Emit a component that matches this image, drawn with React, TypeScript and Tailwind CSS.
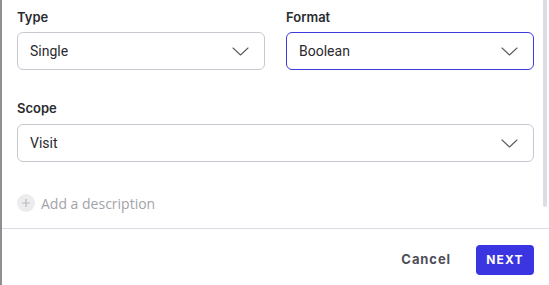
import React from "react";

const Chevron = () => (
  <svg width="17" height="9" viewBox="0 0 17 9" fill="none" className="shrink-0">
    <path d="M1 1l7.5 7 7.5-7" stroke="#5d5c64" strokeWidth="1.1" strokeLinecap="round" strokeLinejoin="round" />
  </svg>
);

const Select = ({ value, active }: { value: string; active?: boolean }) => (
  <div
    className={`h-[38px] rounded-[6px] border flex items-center justify-between pl-[12px] pr-[15px] ${
      active ? "border-[#3d3ae0]" : "border-[#c9c7d0]"
    }`}
  >
    <span className="text-[14px] text-[#2a2a2e]" style={{ fontFamily: "Roboto, Inter, sans-serif" }}>
      {value}
    </span>
    <Chevron />
  </div>
);

const Label = ({ children }: { children: React.ReactNode }) => (
  <div className="h-[16px] leading-[16px] text-[13px] font-semibold text-[#2b2b30]">{children}</div>
);

export default function App() {
  return (
    <div
      className="relative w-[549px] h-[285px] bg-white border-l-2 border-[#8e8e93] flex flex-col overflow-hidden"
      style={{ fontFamily: "Inter, 'Noto Sans', sans-serif" }}
    >
      <div className="absolute right-[2px] top-0 w-[4px] h-[207px] rounded-b-[2px] bg-[#dcdbe6]" />
      <div className="pl-[15px] pr-[15px] pt-[9px]">
        <div className="grid grid-cols-2 gap-x-[21px]">
          <div className="flex flex-col gap-[7px]">
            <Label>Type</Label>
            <Select value="Single" />
          </div>
          <div className="flex flex-col gap-[7px]">
            <Label>Format</Label>
            <Select value="Boolean" active />
          </div>
        </div>
        <div className="mt-[30px] flex flex-col gap-[8px]">
          <Label>Scope</Label>
          <Select value="Visit" />
        </div>
        <div className="mt-[32px] flex items-center gap-[6px] h-[18px]">
          <div className="w-[18px] h-[18px] rounded-full bg-[#ececee] flex items-center justify-center">
            <svg width="10" height="10" viewBox="0 0 10 10">
              <path d="M5 1v8M1 5h8" stroke="#b9b8bf" strokeWidth="1.2" />
            </svg>
          </div>
          <span className="text-[14px] text-[#a3a2aa]" style={{ fontFamily: "'Open Sans', sans-serif" }}>
            Add a description
          </span>
        </div>
      </div>
      <div className="mt-[16px] border-t border-[#dcdbe3]" />
      <div className="flex justify-end items-center pr-[15px] pt-[16px] gap-[25px]">
        <button className="text-[13px] font-bold tracking-[0.07em] text-[#4f4e57]">Cancel</button>
        <button className="w-[58px] h-[30px] rounded-[4px] bg-[#3a34e1] text-white text-[12px] font-bold tracking-[0.1em]">
          NEXT
        </button>
      </div>
    </div>
  );
}
